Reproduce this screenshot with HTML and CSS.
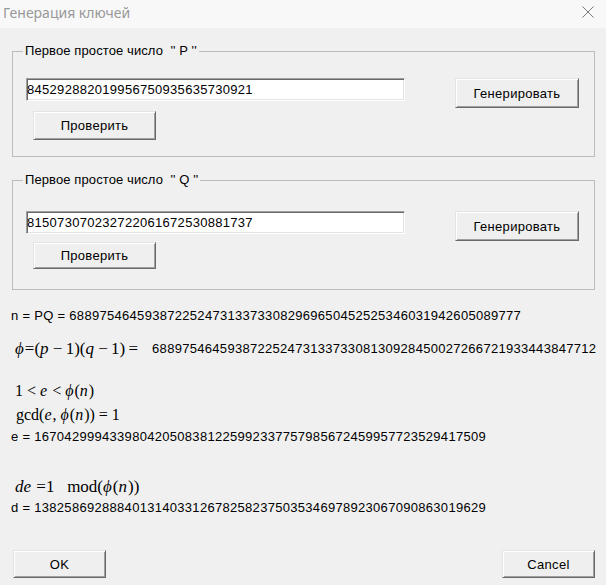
FILE: index.html
```html
<!DOCTYPE html>
<html lang="ru">
<head>
    <meta charset="UTF-8">
    <title>Генерация ключей</title>
    <link rel="stylesheet" href="styles.css">
</head>
<body>
    <div class="window">
        <div class="titlebar">
            <span class="title">Генерация ключей</span>
            <svg class="close" width="12" height="12" viewBox="0 0 12 12">
                <path d="M0.5 0.5 L11.5 11.5 M11.5 0.5 L0.5 11.5" stroke="#7a7a7a" stroke-width="1" fill="none"/>
            </svg>
        </div>

        <fieldset class="group group-p">
            <legend>Первое простое число &nbsp;'' P ''</legend>
            <div class="group-row">
                <div class="group-col">
                    <input class="num-input" type="text" value="845292882019956750935635730921">
                    <button class="btn btn-check">Проверить</button>
                </div>
                <button class="btn btn-gen">Генерировать</button>
            </div>
        </fieldset>

        <fieldset class="group group-q">
            <legend>Первое простое число &nbsp;'' Q ''</legend>
            <div class="group-row">
                <div class="group-col">
                    <input class="num-input" type="text" value="815073070232722061672530881737">
                    <button class="btn btn-check">Проверить</button>
                </div>
                <button class="btn btn-gen">Генерировать</button>
            </div>
        </fieldset>

        <div class="results">
            <div class="line line-n">n = PQ = 688975464593872252473133733082969650452525346031942605089777</div>
            <div class="line line-phi">
                <span class="math math-big"><i>ϕ</i>=(<i>p</i> − 1)(<i>q</i> − 1) =</span>
                <span class="num">688975464593872252473133733081309284500272667219334438477120864</span>
            </div>
            <div class="line line-math line-cond">
                <span class="math">1 &lt; <i>e</i> &lt; <i>ϕ</i>(<i>n</i>)</span>
            </div>
            <div class="line line-math line-gcd">
                <span class="math">gcd(<i>e</i>, <i>ϕ</i>(<i>n</i>)) = 1</span>
            </div>
            <div class="line line-e">e = 167042999433980420508381225992337757985672459957723529417509</div>
            <div class="line line-math line-de">
                <span class="math"><i>de</i> =1 &nbsp;&nbsp;mod(<i>ϕ</i>(<i>n</i>))</span>
            </div>
            <div class="line line-d">d = 138258692888401314033126782582375035346978923067090863019629</div>
        </div>

        <div class="footer">
            <button class="btn btn-dlg">OK</button>
            <button class="btn btn-dlg">Cancel</button>
        </div>
    </div>
</body>
</html>
```

FILE: styles.css
```css
body {
    margin: 0;
    background-color: #f0f0f0;
    font-family: "Liberation Sans", Arial, sans-serif;
    font-size: 13px;
    color: #000;
}
.window {
    width: 606px;
    height: 585px;
    overflow: hidden;
    display: flex;
    flex-direction: column;
}
.titlebar {
    height: 28px;
    flex-shrink: 0;
    background-color: #f8f8f8;
    display: flex;
    align-items: center;
    justify-content: space-between;
    padding: 0 12px 0 3px;
}
.title {
    font-family: "Noto Sans", sans-serif;
    font-size: 14px;
    color: #999;
    margin-top: -4px;
}
.close {
    margin-top: -4px;
}
.group {
    margin: 15px 11px 0 12px;
    border: 1px solid #bcbcbc;
    padding: 19px 15px 16px 13px;
    min-width: 0;
}
.group legend {
    margin-left: -3px;
    padding: 0 2px;
    height: 16px;
    line-height: 16px;
    letter-spacing: 0.1px;
}
.group-q {
    padding-top: 23px;
    padding-bottom: 20px;
}
.group-row {
    display: flex;
    align-items: flex-start;
}
.group-col {
    display: flex;
    flex-direction: column;
    align-items: flex-start;
}
.num-input {
    width: 379px;
    height: 23px;
    box-sizing: border-box;
    margin: 0;
    padding: 0;
    font: inherit;
    letter-spacing: 0.3px;
    background: #fff;
    border: 1px solid;
    border-color: #a0a0a0 #fff #fff #a0a0a0;
    box-shadow: inset 1px 1px 0 #696969, inset -1px -1px 0 #e3e3e3;
    outline: none;
}
.btn {
    font: inherit;
    letter-spacing: 0.3px;
    color: #000;
    background-color: #efefef;
    border: 1px solid;
    border-color: #e3e3e3 #696969 #696969 #e3e3e3;
    box-shadow: inset 1px 1px 0 #fff, inset -1px -1px 0 #a0a0a0;
    box-sizing: border-box;
    padding: 0;
    margin: 0;
    cursor: pointer;
}
.btn-check {
    width: 123px;
    height: 29px;
    margin: 10px 0 0 7px;
}
.group-q .btn-check {
    height: 27px;
    margin-top: 8px;
}
.btn-gen {
    width: 124px;
    height: 30px;
    margin-left: 50px;
}
.results {
    display: flex;
    flex-direction: column;
    padding: 0 10px 0 11px;
}
.line {
    white-space: nowrap;
    overflow: hidden;
    letter-spacing: 0.3px;
}
.line-n {
    height: 16px;
    line-height: 16px;
    margin-top: 18px;
}
.math {
    font-family: "Liberation Serif", "Times New Roman", serif;
    font-size: 16px;
    letter-spacing: 0;
}
.math i {
    padding-right: 1px;
}
.math-big {
    font-size: 17px;
    word-spacing: -1px;
}
.line-phi {
    height: 24px;
    line-height: 24px;
    margin-top: 13px;
    padding-left: 4px;
    display: flex;
    align-items: center;
}
.line-phi .num {
    margin-left: 14px;
}
.line-math {
    height: 22px;
    line-height: 22px;
    padding-left: 4px;
}
.line-cond {
    margin-top: 19px;
}
.line-gcd {
    margin-top: 2px;
    padding-left: 5px;
}
.line-e {
    height: 16px;
    line-height: 16px;
    margin-top: 3px;
}
.line-de {
    margin-top: 31px;
}
.line-de .math {
    font-size: 17px;
}
.line-d {
    height: 16px;
    line-height: 16px;
    margin-top: 2px;
}
.footer {
    display: flex;
    justify-content: space-between;
    padding: 0 11px 0 13px;
    margin-top: 34px;
}
.btn-dlg {
    width: 93px;
    height: 28px;
}
```
